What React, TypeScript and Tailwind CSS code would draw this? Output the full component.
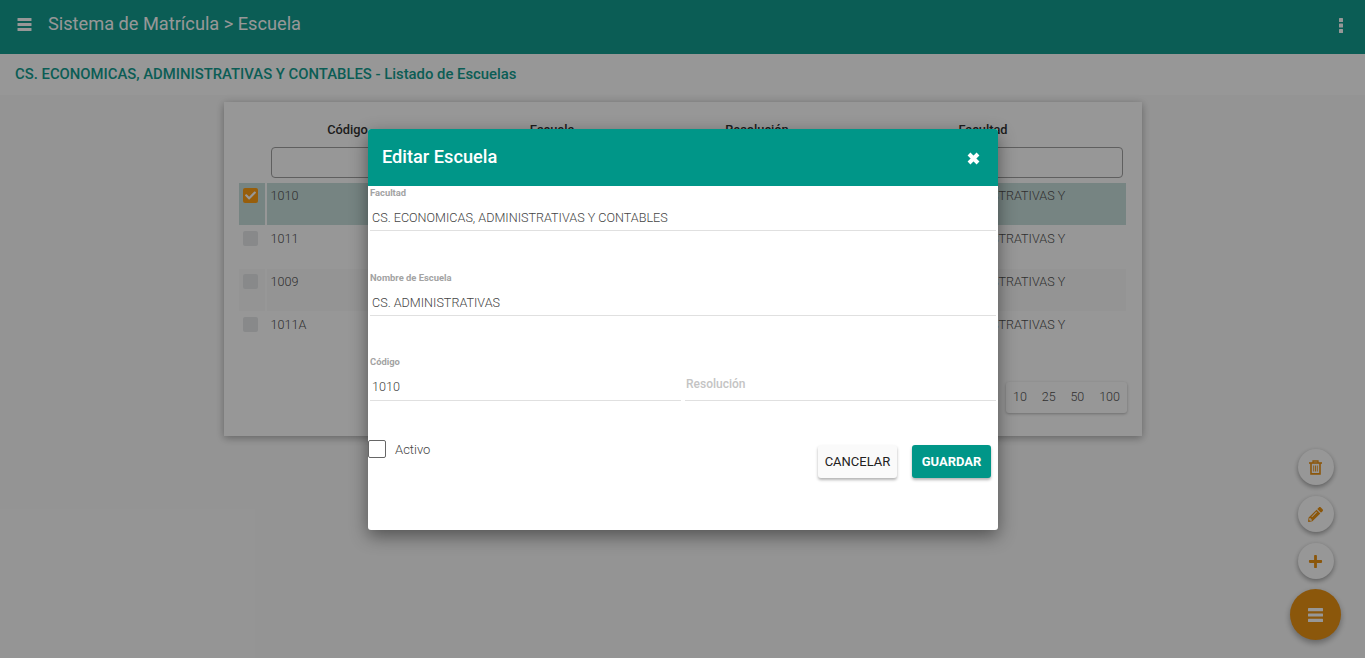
import { FaCheck, FaPencilAlt, FaPlus } from "react-icons/fa";

const rows = [
  { code: "1010", selected: true, striped: false },
  { code: "1011", selected: false, striped: false },
  { code: "1009", selected: false, striped: true },
  { code: "1011A", selected: false, striped: false },
];

const cols = "grid grid-cols-[28px_161px_248px_162px_288px]";

const Bars = ({ className }: { className: string }) => (
  <svg viewBox="0 0 14 13" className={className} fill="currentColor">
    <rect width="14" height="3" rx="0.5" />
    <rect y="5" width="14" height="3" rx="0.5" />
    <rect y="10" width="14" height="3" rx="0.5" />
  </svg>
);

const Trash = () => (
  <svg viewBox="0 0 13 15" className="h-[15px] w-[13px]" fill="none" stroke="currentColor">
    <path d="M0 3h13" strokeWidth="1.6" />
    <path d="M4 3V1h5v2" strokeWidth="1.3" />
    <path d="M2 3v10.9h9V3" strokeWidth="1.6" />
    <path d="M4.7 5.5v6M6.5 5.5v6M8.3 5.5v6" strokeWidth="0.9" />
  </svg>
);

const Field = ({ label, value, tall }: { label: string; value: string; tall?: boolean }) => (
  <div className="border-b border-[#e0e0e0]">
    <div className="h-[14px] pt-[1px] text-[9.4px] leading-[12px] font-bold text-[#a3a3a3]">{label}</div>
    <div className={`${tall ? "h-[31px]" : "h-[30px]"} pt-[9px] pl-[2px] text-[12.6px] leading-[18px] font-light text-[#444]`}>
      {value}
    </div>
  </div>
);

const SmallFab = ({ children }: { children: React.ReactNode }) => (
  <button className="flex h-9 w-9 items-center justify-center rounded-full bg-white text-[15px] text-[#ea8a00] shadow-[0_2px_5px_rgba(0,0,0,0.4)]">
    {children}
  </button>
);

export default function App() {
  return (
    <div className="relative h-[658px] overflow-hidden bg-[#fafafa] font-['Roboto',sans-serif]">
      <header className="flex h-[54px] items-center bg-[#009688] pr-[22px] pl-[17px] text-white">
        <Bars className="mb-[6px] h-[13px] w-[15px]" />
        <h1 className="mb-[6px] ml-[16px] text-[18.2px] leading-none font-normal">Sistema de Matrícula &gt; Escuela</h1>
        <svg viewBox="0 0 4 15" className="mb-[4px] ml-auto h-[15px] w-[4px]" fill="currentColor">
          <rect width="4" height="4" rx="0.5" />
          <rect y="5.5" width="4" height="4" rx="0.5" />
          <rect y="11" width="4" height="4" rx="0.5" />
        </svg>
      </header>
      <div className="flex h-[41px] items-center bg-white pl-[15px] text-[14.85px] font-medium text-[#009688]">
        CS. ECONOMICAS, ADMINISTRATIVAS Y CONTABLES - Listado de Escuelas
      </div>

      <section className="mt-[7px] ml-[224px] h-[334px] w-[918px] bg-white pt-[20px] pr-[16px] pl-[15px] shadow-[0_2px_8px_rgba(0,0,0,0.35)]">
        <div className={`${cols} h-[16px] text-center text-[12.8px] leading-[16px] font-medium text-[#222]`}>
          <div />
          <div>Código</div>
          <div>Escuela</div>
          <div>Resolución</div>
          <div className="pl-[2px]">Facultad</div>
        </div>
        <div className={`${cols} mt-[9px] h-[36px]`}>
          <div />
          {[0, 1, 2, 3].map((i) => (
            <div key={i} className="pr-[3px] pl-[4px]">
              <div className="h-[31px] w-full rounded-[4px] border border-[#999]" />
            </div>
          ))}
        </div>
        {rows.map((row) => (
          <div
            key={row.code}
            className={`${cols} mb-[1px] h-[42px] text-[12.6px] leading-[15px] font-light text-[#444] ${
              row.selected ? "bg-[#c4dcd9]" : row.striped ? "bg-[#fafafa]" : ""
            }`}
          >
            <div className="border-r-2 border-white pt-[5px] pl-[4px]">
              <div
                className={`flex h-[15px] w-[15px] items-center justify-center rounded-[2px] text-[11px] text-white ${
                  row.selected ? "bg-[#ff9800]" : "bg-[#e3e6e8]"
                }`}
              >
                {row.selected && <FaCheck />}
              </div>
            </div>
            <div className="pt-[5px] pl-[3.5px]">{row.code}</div>
            <div />
            <div />
            <div className="pt-[5px] pr-[40px] pl-[4px]">CS. ECONOMICAS, ADMINISTRATIVAS Y CONTABLES</div>
          </div>
        ))}
        <div className="mt-[28px] mr-[-1px] flex justify-end">
          <div className="flex h-[31px] w-[121px] items-center justify-between rounded-[3px] bg-white px-[7px] text-[12.5px] font-light text-[#444] shadow-[0_1px_3px_rgba(0,0,0,0.3)]">
            <span>10</span>
            <span>25</span>
            <span>50</span>
            <span>100</span>
          </div>
        </div>
      </section>

      {/* Botones flotantes */}
      <div className="absolute top-[449px] left-[1290px] flex w-[51px] flex-col items-center gap-[11px]">
        <SmallFab>
          <Trash />
        </SmallFab>
        <SmallFab>
          <FaPencilAlt />
        </SmallFab>
        <SmallFab>
          <FaPlus />
        </SmallFab>
        <button className="-mt-[1px] flex h-[51px] w-[51px] items-center justify-center rounded-full bg-[#ea8a00] text-white shadow-[0_3px_6px_rgba(0,0,0,0.35)]">
          <Bars className="h-[14px] w-[15px]" />
        </button>
      </div>

      <div className="absolute inset-0 bg-[rgba(25,25,25,0.45)]" />

      {/* Modal */}
      <div className="absolute top-[129px] left-[368px] h-[401px] w-[630px] overflow-hidden rounded-[3px] bg-white shadow-[0_6px_18px_rgba(0,0,0,0.45)]">
        <div className="flex h-[57px] items-center justify-between bg-[#009688] pr-[18px] pl-[14px] text-white">
          <h2 className="mb-[2px] text-[18.2px] font-medium">Editar Escuela</h2>
          <svg viewBox="0 0 13 13" className="mt-[2px] h-[13px] w-[13px]" fill="none" stroke="currentColor" strokeWidth="4">
            <path d="M2 2l9 9M11 2l-9 9" />
          </svg>
        </div>
        <div className="px-[2px]">
          <Field label="Facultad" value="CS. ECONOMICAS, ADMINISTRATIVAS Y CONTABLES" />
          <div className="mt-[40px]">
            <Field label="Nombre de Escuela" value="CS. ADMINISTRATIVAS" />
          </div>
          <div className="mt-[39px] grid grid-cols-2 gap-[4px]">
            <Field label="Código" value="1010" tall />
            <div className="border-b border-[#e0e0e0] pt-[20px] pl-[1px] text-[12px] leading-[18px] font-medium text-[#c4c4c4]">
              Resolución
            </div>
          </div>
        </div>
        <div className="mt-[38px] flex items-start justify-between pr-[7px]">
          <label className="flex items-center text-[13px] leading-[18px] font-light text-[#444]">
            <span className="h-[18px] w-[18px] rounded-[2px] border border-[#666]" />
            <span className="mt-[2px] ml-[9px]">Activo</span>
          </label>
          <div className="mt-[6px] flex gap-[15px]">
            <button className="h-[33px] w-[79px] rounded-[3px] bg-[#fafafa] text-[13px] font-normal text-[#222] shadow-[0_2px_3px_rgba(0,0,0,0.3)]">
              CANCELAR
            </button>
            <button className="h-[33px] w-[79px] rounded-[3px] bg-[#009688] text-[13px] font-bold text-white shadow-[0_2px_3px_rgba(0,0,0,0.3)]">
              GUARDAR
            </button>
          </div>
        </div>
      </div>
    </div>
  );
}
